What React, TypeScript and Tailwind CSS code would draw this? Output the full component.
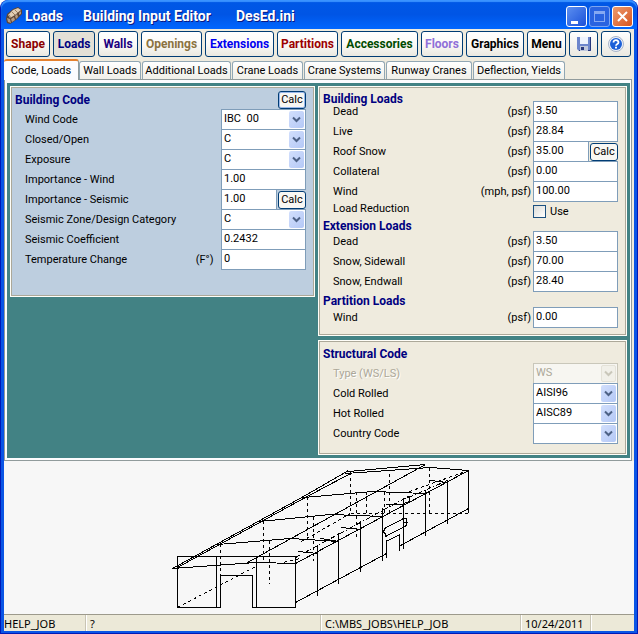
import React from "react";
import type { ReactNode } from "react";

const toolButtons = [
  { label: "Shape", look: "w-[44px] text-[#8b0000]" },
  { label: "Loads", look: "w-[42px] text-[#00007f]", pressed: true },
  { label: "Walls", look: "w-[40px] text-[#20007f]" },
  { label: "Openings", look: "w-[61px] text-[#8b7340]" },
  { label: "Extensions", look: "w-[69px] text-[#0000f0]" },
  { label: "Partitions", look: "w-[61px] text-[#9b0000]" },
  { label: "Accessories", look: "w-[77px] text-[#004b00]" },
  { label: "Floors", look: "w-[42px] text-[#9070d8]" },
  { label: "Graphics", look: "w-[58px] text-black" },
  { label: "Menu", look: "w-[39px] text-black" },
];

const tabs = [
  { label: "Wall Loads", width: "w-[62px]" },
  { label: "Additional Loads", width: "w-[89px]" },
  { label: "Crane Loads", width: "w-[71px]" },
  { label: "Crane Systems", width: "w-[81px]" },
  { label: "Runway Cranes", width: "w-[86px]" },
  { label: "Deflection, Yields", width: "w-[92px]" },
];

const toolBase =
  "flex h-[26px] shrink-0 items-center justify-center rounded-[3px] border border-[#003c74] whitespace-nowrap font-bold";

const plainText = "text-[11px]";

function Logo() {
  return (
    <svg className="h-5 w-5" viewBox="0 0 20 20" aria-hidden="true">
      <path d="M1 13 2 8 8 3l5-2 4 3v4l-6 6-6 4-3-1z" fill="#5c4434" />
      <path d="M3 9 8 4l5-2 3 2-6 5-5 3z" fill="#e0ccb4" />
      <path d="M2 12l3 1 1 4-3-1zM6 13l3-2 1 3-3 2zM10 10l2-2 1 3-2 2zM14 7l2-2v3l-2 1z" fill="#b49a84" />
      <path d="M4 9l2 3M7 6l3 3M10 4l3 3" stroke="#9c7c60" />
    </svg>
  );
}

function TitleBar() {
  const box = "flex h-[21px] w-[21px] items-center justify-center rounded-[3px] border";
  return (
    <header className="flex h-[29px] items-center rounded-t-lg bg-linear-to-b from-[#0058e6] via-[#0055e5] to-[#0066ff] pt-[3px] pr-1 pl-1 shadow-[inset_0_2px_1px_#3a93ff]">
      <Logo />
      <h1 className="flex flex-1 text-sm leading-5 font-bold whitespace-pre text-white [text-shadow:1px_1px_#0a1883]">
        <span className="w-[58px]">Loads</span>
        <span className="w-[153px]">Building Input Editor</span>
        <span>DesEd.ini</span>
      </h1>
      <div className="flex gap-[2px]">
        <button aria-label="Minimize" className={box + " border-white bg-linear-to-br from-[#5c8ef0] to-[#1b4fd8]"}>
          <span className="mt-3 mr-1 h-[3px] w-[7px] bg-white" />
        </button>
        <button aria-label="Maximize" className={box + " border-[#7ea5f0] bg-[#2a63e0]"}>
          <span className="h-[11px] w-[11px] border border-t-[3px] border-[#86a9f2]" />
        </button>
        <button aria-label="Close" className={box + " border-white bg-linear-to-br from-[#ec9a6c] to-[#d6541c]"}>
          <svg className="h-[13px] w-[13px]" viewBox="0 0 13 13">
            <path d="M2 2l9 9M11 2l-9 9" stroke="white" strokeWidth="2" />
          </svg>
        </button>
      </div>
    </header>
  );
}

function Toolbar() {
  return (
    <nav className="flex gap-[3px] px-[2px] pt-[2px] text-xs">
      {toolButtons.map((b) => (
        <button
          key={b.label}
          className={
            toolBase +
            " " +
            b.look +
            (b.pressed ? " bg-[#e3e0d6]" : " bg-linear-to-b from-white via-[#fbfaf7] to-[#eae8e0]")
          }
        >
          {b.label}
        </button>
      ))}
      <button aria-label="Save" className={toolBase + " w-[29px] bg-linear-to-b from-white to-[#eae8e0]"}>
        <svg className="h-4 w-4" viewBox="0 0 16 16">
          <path d="M1 1h14v14H3l-2-2z" fill="#6d86cc" />
          <path d="M14.500 1v13.500H3" stroke="#28387c" fill="none" />
          <path d="M4 1h8v7H4z" fill="#eef3fd" />
          <path d="M4 10h8v5H4z" fill="#c0c8dc" />
          <path d="M5 11h3v3H5z" fill="#28387c" />
        </svg>
      </button>
      <button aria-label="Help" className={toolBase + " w-[30px] bg-linear-to-b from-white to-[#eae8e0]"}>
        <svg className="h-4 w-4" viewBox="0 0 16 16">
          <circle cx="8" cy="8" r="7.500" fill="#eef2fa" stroke="#a8b4c8" />
          <circle cx="8" cy="8" r="6" fill="#1c60d8" />
          <path d="M5.500 6.500c0-3.500 5-3 5 0 0 1.500-2.500 1.500-2.500 3.200" stroke="white" strokeWidth="1.800" fill="none" />
          <path d="M7 10.800h2v1.700H7z" fill="white" />
        </svg>
      </button>
    </nav>
  );
}

function TabStrip() {
  return (
    <div role="tablist" className={"flex items-end pt-[2px] " + plainText}>
      <button
        role="tab"
        aria-selected="true"
        className="-mb-px h-[21px] w-[75px] rounded-t-[3px] border-t-2 border-r border-[#919b9c] border-t-[#e5812f] bg-[#fcfcfe] leading-4 whitespace-nowrap"
      >
        Code, Loads
      </button>
      {tabs.map((t) => (
        <button
          key={t.label}
          role="tab"
          aria-selected="false"
          className={
            "mr-px h-[18px] shrink-0 rounded-t-[3px] border border-b-0 border-[#91a7b4] bg-linear-to-b from-white to-[#f0efe8] leading-[18px] whitespace-nowrap last:mr-0 " +
            t.width
          }
        >
          {t.label}
        </button>
      ))}
    </div>
  );
}

function Panel({ tone, label, children }: { tone: string; label: string; children: ReactNode }) {
  return (
    <section aria-label={label} className={"border border-[#fffef8] outline-1 -outline-offset-2 outline-[#aca899] " + tone}>
      {children}
    </section>
  );
}

function Heading({ children }: { children: ReactNode }) {
  return <h2 className="text-xs leading-4 font-bold text-[#000080]">{children}</h2>;
}

function Calc({ active, name }: { active?: boolean; name: string }) {
  return (
    <button
      aria-label={"Calc " + name}
      className={
        "h-[18px] w-7 shrink-0 rounded-[3px] border border-[#003c74] bg-[#f8f7f3] leading-4 " +
        plainText +
        (active ? " shadow-[inset_0_0_0_1px_#9ab8ea]" : "")
      }
    >
      Calc
    </button>
  );
}

function Row({ id, label, unit, disabled, children }: {
  id: string;
  label: string;
  unit?: string;
  disabled?: boolean;
  children: ReactNode;
}) {
  return (
    <div className={"flex h-5 items-start " + plainText}>
      <label
        htmlFor={id}
        className={"flex flex-1 justify-between pr-[2px] leading-[22px] whitespace-nowrap " + (disabled ? "text-[#aca899] [text-shadow:1px_1px_white]" : "")}
      >
        <span>{label}</span>
        <span>{unit}</span>
      </label>
      <div className="flex w-[85px] shrink-0">{children}</div>
    </div>
  );
}

function Field({ id, value }: { id: string; value: string }) {
  return (
    <input
      id={id}
      defaultValue={value}
      className="h-[21px] w-full min-w-0 border border-[#7f9db9] bg-white pb-[2px] pl-[2px] leading-4 outline-none"
    />
  );
}

function Picker({ id, value, disabled }: { id: string; value: string; disabled?: boolean }) {
  return (
    <div className="relative w-full">
      <select
        id={id}
        disabled={disabled}
        defaultValue={value}
        className={
          "block h-[21px] w-full appearance-none border pb-[2px] pl-[2px] leading-4 whitespace-pre outline-none " +
          (disabled ? "border-[#c9c7ba] bg-[#f7f6f1] text-[#aca899] opacity-100" : "border-[#7f9db9] bg-white")
        }
      >
        <option>{value}</option>
      </select>
      <span
        className={
          "pointer-events-none absolute top-[2px] right-[2px] flex h-[17px] w-[15px] items-center justify-center rounded-[2px] " +
          (disabled ? "border border-[#e4e2d8] bg-[#f1f0e9] text-[#c9c7ba]" : "bg-linear-to-br from-[#d2dffc] to-[#b4c8f6] text-[#4d6185]")
        }
      >
        <svg className="h-[7px] w-[9px]" viewBox="0 0 9 7">
          <path d="M1 1.500l3.500 3.500L8 1.500" stroke="currentColor" strokeWidth="2" fill="none" />
        </svg>
      </span>
    </div>
  );
}

function BuildingCode() {
  return (
    <Panel tone="bg-[#bdcedf] pb-[27px] pl-1 pr-2 pt-1" label="Building Code">
      <div className="flex h-[18px] items-center justify-between">
        <Heading>Building Code</Heading>
        <Calc active name="Building Code" />
      </div>
      <div className="pl-[10px]">
        <Row id="windCode" label="Wind Code"><Picker id="windCode" value={"IBC\u00a0 00"} /></Row>
        <Row id="closed" label="Closed/Open"><Picker id="closed" value="C" /></Row>
        <Row id="exposure" label="Exposure"><Picker id="exposure" value="C" /></Row>
        <Row id="impWind" label="Importance - Wind"><Field id="impWind" value="1.00" /></Row>
        <Row id="impSeis" label="Importance - Seismic">
          <Field id="impSeis" value="1.00" />
          <div className="pt-[2px] pl-px"><Calc name="Importance - Seismic" /></div>
        </Row>
        <Row id="zone" label="Seismic Zone/Design Category"><Picker id="zone" value="C" /></Row>
        <Row id="coef" label="Seismic Coefficient"><Field id="coef" value="0.2432" /></Row>
        <Row id="temp" label="Temperature Change" unit={"(F°)\u00a0\u00a0"}><Field id="temp" value="0" /></Row>
      </div>
    </Panel>
  );
}

function LoadsPanel() {
  return (
    <Panel tone="bg-[#efebde] pb-2 pl-1 pr-2 pt-1" label="Loads">
      <Heading>Building Loads</Heading>
      <div className="-mt-[6px] pl-[10px]">
        <Row id="dead" label="Dead" unit="(psf)"><Field id="dead" value="3.50" /></Row>
        <Row id="live" label="Live" unit="(psf)"><Field id="live" value="28.84" /></Row>
        <Row id="snow" label="Roof Snow" unit="(psf)">
          <Field id="snow" value="35.00" />
          <div className="pt-[2px] pl-px"><Calc name="Roof Snow" /></div>
        </Row>
        <Row id="coll" label="Collateral" unit="(psf)"><Field id="coll" value="0.00" /></Row>
        <Row id="wind" label="Wind" unit="(mph, psf)"><Field id="wind" value="100.00" /></Row>
        <div className={"flex h-[17px] leading-4 " + plainText}>
          <span className="flex-1">Load Reduction</span>
          <label className="flex w-[85px] items-center gap-1 pt-1">
            <input type="checkbox" className="h-[13px] w-[13px] appearance-none border border-[#1c5180] bg-linear-to-br from-[#dcdcd7] to-white" />
            Use
          </label>
        </div>
      </div>
      <Heading>Extension Loads</Heading>
      <div className="-mt-[3px] pl-[10px]">
        <Row id="xdead" label="Dead" unit="(psf)"><Field id="xdead" value="3.50" /></Row>
        <Row id="side" label="Snow, Sidewall" unit="(psf)"><Field id="side" value="70.00" /></Row>
        <Row id="end" label="Snow, Endwall" unit="(psf)"><Field id="end" value="28.40" /></Row>
      </div>
      <div className="pt-[2px]"><Heading>Partition Loads</Heading></div>
      <div className="-mt-[2px] pl-[10px]">
        <Row id="pwind" label="Wind" unit="(psf)"><Field id="pwind" value="0.00" /></Row>
      </div>
    </Panel>
  );
}

function StructuralPanel() {
  return (
    <Panel tone="bg-[#efebde] pb-[11px] pl-1 pr-2 pt-[5px]" label="Structural Code">
      <Heading>Structural Code</Heading>
      <div className="pt-px pl-[10px]">
        <Row id="type" label="Type (WS/LS)" disabled><Picker id="type" value="WS" disabled /></Row>
        <Row id="cold" label="Cold Rolled"><Picker id="cold" value="AISI96" /></Row>
        <Row id="hot" label="Hot Rolled"><Picker id="hot" value="AISC89" /></Row>
        <Row id="country" label="Country Code"><Picker id="country" value="" /></Row>
      </div>
    </Panel>
  );
}

function Wireframe() {
  return (
    <svg className="mx-auto block h-[153px] w-[300px]" viewBox="169 461 300 153" fill="none" stroke="black" shapeRendering="crispEdges" role="img" aria-label="Building frame">
      {/* front endwall with framed opening */}
      <path d="M177.500 556.500H295.500V607.500H252.500V575.500H220.500V607.500H177.500zM216.500 556.500v51M256.500 556.500v51" />
      {/* roof frames */}
      <path d="M172.500 568.500 256.500 562.500 295.500 563.500M217.500 544.500 290.500 538.500 338.500 541.500M259.500 521.500 330.500 514.500 382.500 516.500M303.500 497.500 372.500 491.500 425.500 493.500M348.500 471.500 425.500 464.500 M345.500 473.500 430.500 467.500 468.500 470.500" />
      {/* eaves, ridge and ground line */}
      <path d="M172.500 568.500 303.500 496.500 348.500 470.500M177.500 567.500 303.500 498.500 350.500 473.500M247.500 562.500 425.500 464.500M295.500 563.500 468.500 470.500M295.500 602.500 386.500 553.500M400.500 545.500 468.500 508.500" />
      {/* sidewall columns */}
      <path d="M317.500 545v51M338.500 533v51M360.500 521v51M382.500 508v53M403.500 498v51M425.500 490v46M447.500 480v44M468.500 470v43" />
      {/* sidewall door and canopy */}
      <path d="M386.500 558v-17l13-6v16M384.500 528.500l19-10h3v7l-21 11v-3l-2-1zM403.500 522.500h4" />
      {/* roof braces */}
      <path d="M298.500 551.500l19 2M320.500 538.500l18 3M341.500 527.500l19 2M385.500 504.500h18M430.500 480.500l17 2M407.500 496.500h2v5l-6 2" />
      {/* hidden members */}
      <path
        strokeDasharray="3 3"
        d="M220.500 544v31M263.500 521v41M269.500 541v43M307.500 497v40M313.500 517v44M350.500 472v41M356.500 492v45M366.500 492v21M384.500 492v21M389.500 474v39M429.500 468v45M350.500 513.500h118M177.500 607.500 257.500 565.500M301.500 541.500 350.500 513.500M278.500 563.500 300.500 558.500M409.500 491.500 468.500 470.500"
      />
      <path strokeDasharray="5 2 1 2" d="M295.500 557.500 408.500 496.500M408.500 497.500 447.500 480.500" />
    </svg>
  );
}

function StatusBar() {
  const cell = "border-r border-[#c8c4b4] pl-1 shadow-[1px_0_white]";
  return (
    <footer className="flex h-[17px] border-t border-[#9d9a8c] bg-[#ece9d8] font-['Noto_Sans',sans-serif] text-[11px] leading-[18px] whitespace-nowrap">
      <span className="w-[82px] border-r border-[#c8c4b4] shadow-[1px_0_white]">HELP_JOB</span>
      <span className={cell + " flex-1"}>?</span>
      <span className={cell + " w-[200px]"}>C:\MBS_JOBS\HELP_JOB</span>
      <span className={cell + " w-[70px]"}>10/24/2011</span>
      <span className="w-[43px]" />
    </footer>
  );
}

export default function App() {
  return (
    <div className="rounded-t-lg border-x border-b border-[#0019b8] bg-[#0a55e5] pb-[2px] font-[Roboto,'Liberation_Sans',sans-serif] text-black">
      <TitleBar />
      <main className="mx-[3px] bg-[#efebde]">
        <Toolbar />
        <TabStrip />
        <div className="mr-[2px] border border-[#919b9c] bg-[#fcfcfe] pt-[3px] pr-px pb-[2px] pl-[2px]">
          <div className="grid grid-cols-[305fr_309fr] items-start gap-[3px] bg-[#428284] p-[3px]">
            <BuildingCode />
            <div className="flex flex-col gap-1">
              <LoadsPanel />
              <StructuralPanel />
            </div>
          </div>
        </div>
        <div className="bg-[#f7f7f7]">
          <Wireframe />
        </div>
        <StatusBar />
      </main>
    </div>
  );
}
